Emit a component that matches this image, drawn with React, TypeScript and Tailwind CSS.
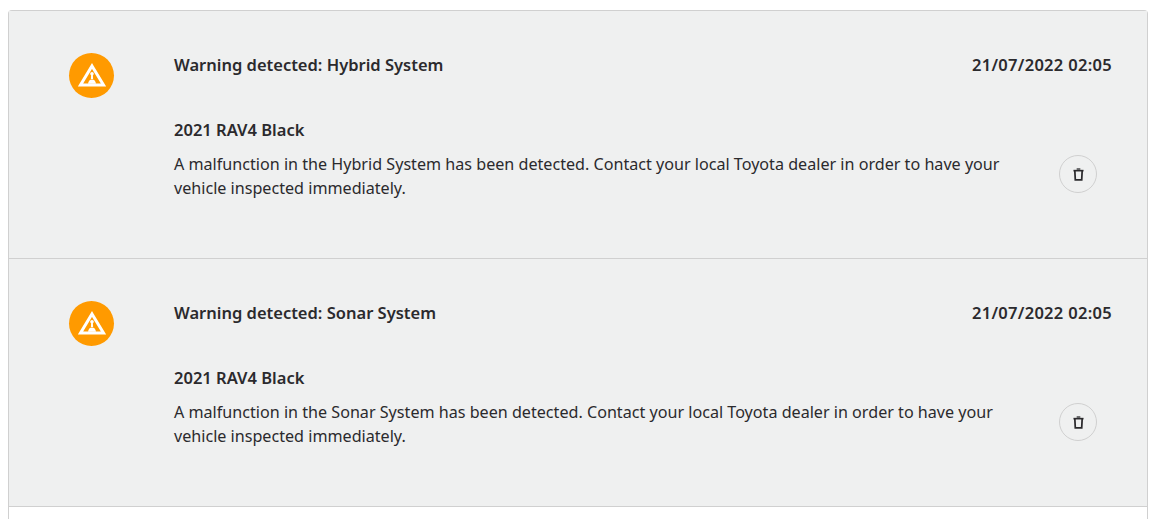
const alerts = [
  {
    title: 'Warning detected: Hybrid System',
    date: '21/07/2022 02:05',
    car: '2021 RAV4 Black',
    body: 'A malfunction in the Hybrid System has been detected. Contact your local Toyota dealer in order to have your vehicle inspected immediately.',
  },
  {
    title: 'Warning detected: Sonar System',
    date: '21/07/2022 02:05',
    car: '2021 RAV4 Black',
    body: 'A malfunction in the Sonar System has been detected. Contact your local Toyota dealer in order to have your vehicle inspected immediately.',
  },
];

function WarningIcon() {
  return (
    <div className="w-[45px] h-[45px] rounded-full bg-[#ff9a00] flex items-center justify-center">
      <svg width="30" height="28" viewBox="0 0 30 28" fill="none">
        <path d="M15 4 L26.5 23 H3.5 Z" stroke="#fff" strokeWidth="3" strokeLinejoin="miter" />
        <circle cx="15" cy="11.8" r="1.8" fill="#fff" />
        <path d="M14.2 12 h1.6 l0.3 5 h-2.2 Z" fill="#fff" />
        <path d="M11 21.8 C11.4 19 12.8 17.5 15 17.5 C17.2 17.5 18.6 19 19 21.8 Z" fill="#fff" />
      </svg>
    </div>
  );
}

function TrashIcon() {
  return (
    <svg width="11" height="13" viewBox="0 0 12 14" fill="none">
      <path d="M4 1 H8" stroke="#2b2a2d" strokeWidth="1.4" />
      <path d="M0.5 2.8 H11.5" stroke="#2b2a2d" strokeWidth="1.8" />
      <path d="M2 3 L2.5 12.8 H9.5 L10 3" stroke="#2b2a2d" strokeWidth="1.9" />
    </svg>
  );
}

export default function App() {
  return (
    <div className="bg-white h-[519px] overflow-hidden pt-[10px] pl-2 pr-3 font-['Noto_Sans','Open_Sans',sans-serif] text-[#2b2a2d]">
      <div className="border border-b-0 border-[#d0d0d0] rounded-t-[4px] h-[509px] flex flex-col">
        {alerts.map((a) => (
          <div key={a.title} className="h-[248px] shrink-0 bg-[#eff0f0] border-b border-[#d0d0d0] flex pt-[42px] pr-[35px]">
            <div className="w-[165px] shrink-0 pl-[60px]">
              <WarningIcon />
            </div>
            <div className="flex-1 min-w-0">
              <div className="flex justify-between items-center h-[24px]">
                <span className="text-[16.5px] font-semibold">{a.title}</span>
                <span className="text-[16.5px] font-semibold tracking-[0.3px]">{a.date}</span>
              </div>
              <div className="mt-[40px] text-[16.5px] font-semibold leading-[26px]">{a.car}</div>
              <div className="flex items-start justify-between mt-[7px]">
                <p className="w-[840px] pt-[2px] text-[16.14px] leading-[24px]">{a.body}</p>
                <button className="w-[38px] h-[38px] mt-[5px] mr-[15px] rounded-full border border-[#d0d0d0] flex items-center justify-center">
                  <TrashIcon />
                </button>
              </div>
            </div>
          </div>
        ))}
      </div>
    </div>
  );
}
